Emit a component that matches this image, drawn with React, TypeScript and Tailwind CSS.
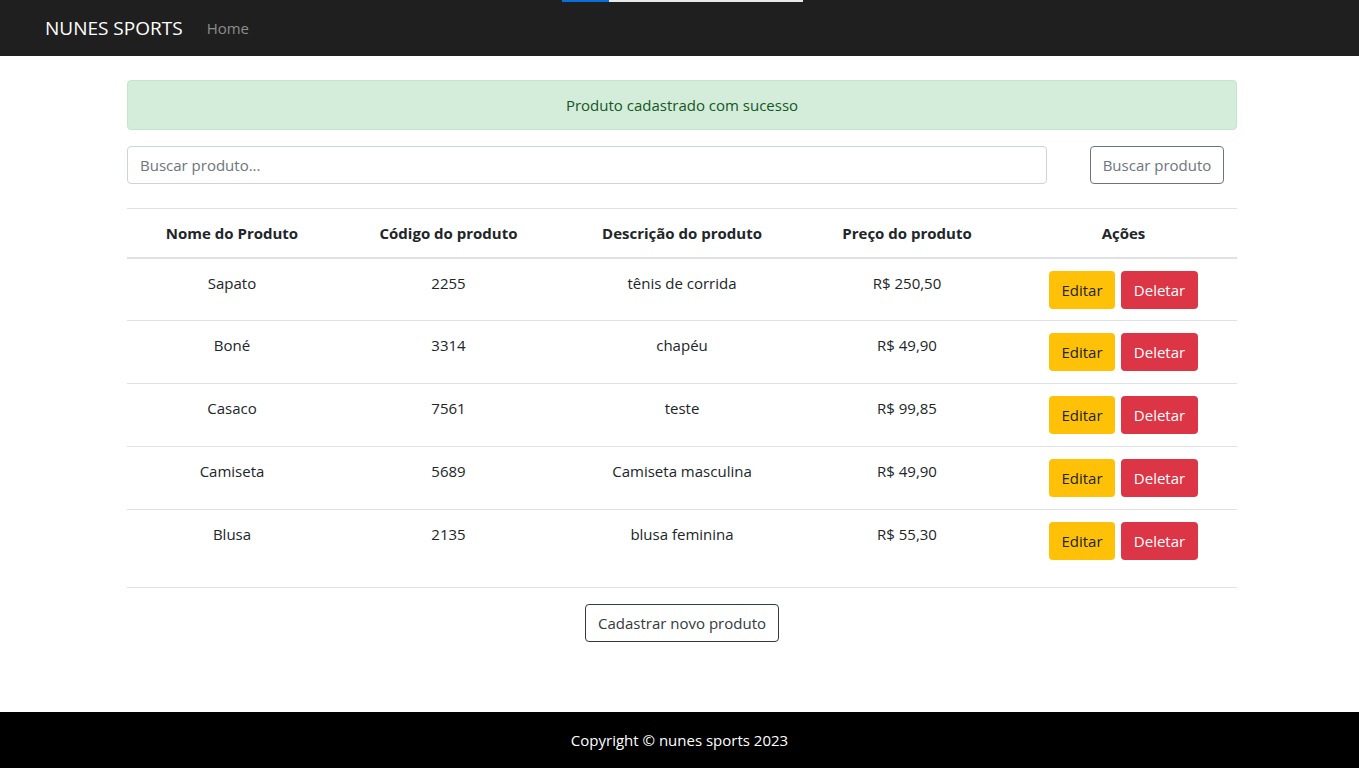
import React from "react";

const rows = [
  { nome: "Sapato", codigo: "2255", desc: "tênis de corrida", preco: "R$ 250,50" },
  { nome: "Boné", codigo: "3314", desc: "chapéu", preco: "R$ 49,90" },
  { nome: "Casaco", codigo: "7561", desc: "teste", preco: "R$ 99,85" },
  { nome: "Camiseta", codigo: "5689", desc: "Camiseta masculina", preco: "R$ 49,90" },
  { nome: "Blusa", codigo: "2135", desc: "blusa feminina", preco: "R$ 55,30" },
];

export default function App() {
  return (
    <div className="min-h-[768px] flex flex-col bg-white text-[#212529] text-[15px] leading-6 [font-family:'Open_Sans',sans-serif]">
      <nav className="relative h-[56px] bg-[#1f1f1f] flex items-center pl-[45px]">
        <div className="absolute top-0 left-[562px] flex h-[2px]">
          <div className="w-[47px] bg-[#0a6fd8]" />
          <div className="w-[194px] bg-[#e8e8e8]" />
        </div>
        <span className="text-white text-[19px] leading-[30px] mr-[24px]">NUNES SPORTS</span>
        <span className="text-[#8c8c8c] text-[15px]">Home</span>
      </nav>

      <main className="flex-1 ml-[127px] w-[1110px] pt-[24px]">
        <div className="h-[50px] rounded-[4px] border border-[#c3e6cb] bg-[#d4edda] text-[#155724] flex items-center justify-center">
          Produto cadastrado com sucesso
        </div>

        <div className="mt-[16px] flex items-center">
          <input
            className="w-[920px] h-[38px] rounded-[4px] border border-[#ced4da] px-[12px] text-[15px] placeholder:text-[#6c757d] outline-none"
            placeholder="Buscar produto..."
          />
          <button className="ml-[43px] h-[38px] w-[134px] rounded-[4px] border border-[#6c757d] text-[#6c757d] text-[15px]">
            Buscar produto
          </button>
        </div>

        <table className="mt-[24px] w-[1110px] border-collapse table-fixed">
          <colgroup>
            <col className="w-[210px]" />
            <col className="w-[223px]" />
            <col className="w-[244px]" />
            <col className="w-[206px]" />
            <col className="w-[227px]" />
          </colgroup>
          <thead>
            <tr className="border-t border-[#dee2e6] border-b-2">
              <th className="h-[49px] font-bold text-center align-middle">Nome do Produto</th>
              <th className="font-bold text-center">Código do produto</th>
              <th className="font-bold text-center">Descrição do produto</th>
              <th className="font-bold text-center">Preço do produto</th>
              <th className="font-bold text-center">Ações</th>
            </tr>
          </thead>
          <tbody>
            {rows.map((r, i) => {
              const last = i === rows.length - 1;
              return (
                <tr key={i} className="border-b border-[#dee2e6]">
                  <td className={`text-center align-top pt-[12px] ${last ? "h-[78px]" : "h-[63px]"}`}>{r.nome}</td>
                  <td className="text-center align-top pt-[12px]">{r.codigo}</td>
                  <td className="text-center align-top pt-[12px]">{r.desc}</td>
                  <td className="text-center align-top pt-[12px]">{r.preco}</td>
                  <td className="align-top pt-[12px]">
                    <div className="flex justify-center gap-[6px]">
                      <button className="h-[38px] w-[66px] rounded-[4px] bg-[#ffc107] text-[#212529]">Editar</button>
                      <button className="h-[38px] w-[77px] rounded-[4px] bg-[#dc3545] text-white">Deletar</button>
                    </div>
                  </td>
                </tr>
              );
            })}
          </tbody>
        </table>

        <div className="mt-[16px] flex justify-center">
          <button className="h-[38px] w-[194px] rounded-[4px] border border-[#343a40] text-[#343a40]">
            Cadastrar novo produto
          </button>
        </div>
      </main>

      <footer className="h-[56px] bg-black text-white flex items-center justify-center">
        Copyright © nunes sports 2023
      </footer>
    </div>
  );
}
